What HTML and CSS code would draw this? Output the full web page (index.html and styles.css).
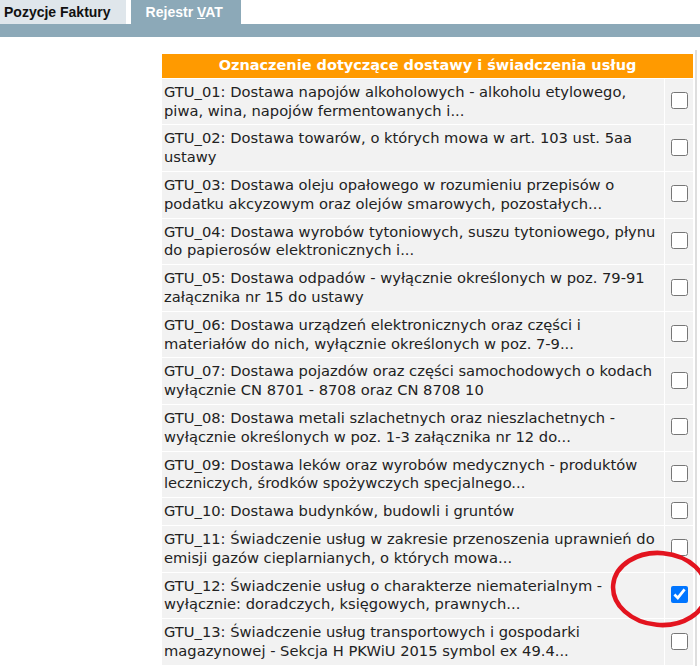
FILE: index.html
```html
<!DOCTYPE html>
<html lang="pl">
	<head>
		<meta charset="utf-8"/>
		<title>Rejestr VAT</title>
		<link rel="stylesheet" href="styles.css">
	</head>
	<body>
		<div class="tabs">
			<div class="tab">Pozycje Faktury</div>
			<div class="tab active">Rejestr <u>V</u>AT</div>
		</div>
		<div class="tabBar"></div>

		<div class="panel">
			<table class="gtu">
				<thead>
					<tr><th colspan="2">Oznaczenie dotyczące dostawy i świadczenia usług</th></tr>
				</thead>
				<tbody>
					<tr>
						<td class="desc">GTU_01: Dostawa napojów alkoholowych - alkoholu etylowego, piwa, wina, napojów fermentowanych i...</td>
						<td class="chk"><input type="checkbox"/></td>
					</tr>
					<tr>
						<td class="desc">GTU_02: Dostawa towarów, o których mowa w art. 103 ust. 5aa ustawy</td>
						<td class="chk"><input type="checkbox"/></td>
					</tr>
					<tr>
						<td class="desc">GTU_03: Dostawa oleju opałowego w rozumieniu przepisów o podatku akcyzowym oraz olejów smarowych, pozostałych...</td>
						<td class="chk"><input type="checkbox"/></td>
					</tr>
					<tr>
						<td class="desc">GTU_04: Dostawa wyrobów tytoniowych, suszu tytoniowego, płynu do papierosów elektronicznych i...</td>
						<td class="chk"><input type="checkbox"/></td>
					</tr>
					<tr>
						<td class="desc">GTU_05: Dostawa odpadów - wyłącznie określonych w poz. 79-91 załącznika nr 15 do ustawy</td>
						<td class="chk"><input type="checkbox"/></td>
					</tr>
					<tr>
						<td class="desc">GTU_06: Dostawa urządzeń elektronicznych oraz części i materiałów do nich, wyłącznie określonych w poz. 7-9...</td>
						<td class="chk"><input type="checkbox"/></td>
					</tr>
					<tr>
						<td class="desc">GTU_07: Dostawa pojazdów oraz części samochodowych o kodach wyłącznie CN 8701 - 8708 oraz CN 8708 10</td>
						<td class="chk"><input type="checkbox"/></td>
					</tr>
					<tr>
						<td class="desc">GTU_08: Dostawa metali szlachetnych oraz nieszlachetnych - wyłącznie określonych w poz. 1-3 załącznika nr 12 do...</td>
						<td class="chk"><input type="checkbox"/></td>
					</tr>
					<tr>
						<td class="desc">GTU_09: Dostawa leków oraz wyrobów medycznych - produktów leczniczych, środków spożywczych specjalnego...</td>
						<td class="chk"><input type="checkbox"/></td>
					</tr>
					<tr>
						<td class="desc">GTU_10: Dostawa budynków, budowli i gruntów</td>
						<td class="chk"><input type="checkbox"/></td>
					</tr>
					<tr>
						<td class="desc">GTU_11: Świadczenie usług w zakresie przenoszenia uprawnień do emisji gazów cieplarnianych, o których mowa...</td>
						<td class="chk"><input type="checkbox"/></td>
					</tr>
					<tr>
						<td class="desc">GTU_12: Świadczenie usług o charakterze niematerialnym - wyłącznie: doradczych, księgowych, prawnych...</td>
						<td class="chk"><input type="checkbox" checked/></td>
					</tr>
					<tr>
						<td class="desc">GTU_13: Świadczenie usług transportowych i gospodarki magazynowej - Sekcja H PKWiU 2015 symbol ex 49.4...</td>
						<td class="chk"><input type="checkbox"/></td>
					</tr>
				</tbody>
			</table>
		</div>

		<!-- red marker drawn over the screenshot -->
		<svg class="marker" width="100" height="84" viewBox="0 0 100 84">
			<ellipse cx="51" cy="40" rx="47" ry="36" fill="none" stroke="#e3141f" stroke-width="4.5" transform="rotate(5 51 40)"/>
		</svg>
	</body>
</html>
```

FILE: styles.css
```css
body{
	margin: 0;
	padding: 0;
	background: #fff;
	color: #222;
	font-family: "DejaVu Sans", Verdana, sans-serif;
}

.tabs{
	display: flex;
	gap: 5px;
	height: 24px;
}

.tab{
	font-family: "Liberation Sans", Arial, sans-serif;
	font-size: 14px;
	font-weight: bold;
	line-height: 24px;
	padding: 0 15px 0 4px;
	background: #dfe6eb;
	color: #111;
}

.tab.active{
	width: 80px;
	padding: 0 15px;
	background: #8ca9b8;
	color: #fff;
}

.tabBar{
	height: 13px;
	background: #8ca9b8;
}

.panel{
	margin-top: 13px;
	margin-right: 3px;
	padding: 3px 1px 0 0;
	border-right: 2px solid #dedede;
	display: flex;
	justify-content: flex-end;
}

.gtu{
	width: 533px;
	border-collapse: separate;
	border-spacing: 1px;
	font-size: 14.7px;
	line-height: 18.8px;
}

.gtu th{
	background: #ff9a00;
	color: #fff;
	font-size: 14.5px;
	font-weight: bold;
	padding: 2px 0 3px;
	text-align: center;
}

.gtu td{
	background: #f2f2f2;
	padding: 4px 0 4px 2px;
}

.gtu td.chk{
	width: 28px;
	padding: 0;
	text-align: center;
	vertical-align: middle;
}

.chk input{
	width: 17px;
	height: 17px;
	margin: 3px 0 0;
}

.marker{
	position: absolute;
	left: 609px;
	top: 549px;
}
```
